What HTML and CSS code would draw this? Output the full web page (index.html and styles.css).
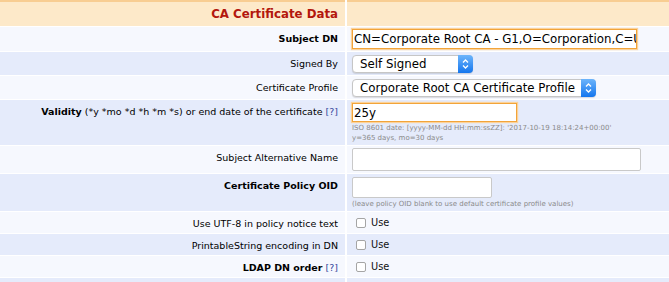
FILE: index.html
```html
<!DOCTYPE html>
<html lang="en">
<head>
    <meta charset="UTF-8">
    <meta name="viewport" content="width=device-width, initial-scale=1.0">
    <title>Create CA</title>
    <link rel="stylesheet" href="styles.css">
</head>
<body>

    <table class="edit">
        <tr class="section">
            <td class="label"><h3>CA Certificate Data</h3></td>
            <td class="value"></td>
        </tr>
        <tr class="light">
            <td class="label"><strong>Subject DN</strong></td>
            <td class="value"><input type="text" class="text required dn" value="CN=Corporate Root CA - G1,O=Corporation,C=US"></td>
        </tr>
        <tr class="dark">
            <td class="label">Signed By</td>
            <td class="value">
                <span class="select signed">
                    <select><option>Self Signed</option></select>
                    <svg class="arrows" viewBox="0 0 15 18"><defs><linearGradient id="g1" x1="0" y1="0" x2="0" y2="1"><stop offset="0" stop-color="#6db5fb"/><stop offset="1" stop-color="#1476ee"/></linearGradient></defs><path d="M0 0H11A4 4 0 0 1 15 4V14A4 4 0 0 1 11 18H0Z" fill="url(#g1)"/><path d="M5 7.5L7.5 5L10 7.5M5 10.5L7.5 13L10 10.5" fill="none" stroke="#fff" stroke-width="1.3"/></svg>
                </span>
            </td>
        </tr>
        <tr class="light">
            <td class="label">Certificate Profile</td>
            <td class="value">
                <span class="select profile">
                    <select><option>Corporate Root CA Certificate Profile</option></select>
                    <svg class="arrows" viewBox="0 0 15 18"><defs><linearGradient id="g2" x1="0" y1="0" x2="0" y2="1"><stop offset="0" stop-color="#6db5fb"/><stop offset="1" stop-color="#1476ee"/></linearGradient></defs><path d="M0 0H11A4 4 0 0 1 15 4V14A4 4 0 0 1 11 18H0Z" fill="url(#g2)"/><path d="M5 7.5L7.5 5L10 7.5M5 10.5L7.5 13L10 10.5" fill="none" stroke="#fff" stroke-width="1.3"/></svg>
                </span>
            </td>
        </tr>
        <tr class="dark">
            <td class="label"><strong>Validity</strong> (*y *mo *d *h *m *s) or end date of the certificate <a href="#">[?]</a></td>
            <td class="value">
                <input type="text" class="text required validity" value="25y">
                <p class="help">ISO 8601 date: [yyyy-MM-dd HH:mm:ssZZ]: '2017-10-19 18:14:24+00:00'<br>y=365 days, mo=30 days</p>
            </td>
        </tr>
        <tr class="light">
            <td class="label">Subject Alternative Name</td>
            <td class="value"><input type="text" class="text san"></td>
        </tr>
        <tr class="dark">
            <td class="label"><strong>Certificate Policy OID</strong></td>
            <td class="value">
                <input type="text" class="text oid">
                <p class="help">(leave policy OID blank to use default certificate profile values)</p>
            </td>
        </tr>
        <tr class="light">
            <td class="label">Use UTF-8 in policy notice text</td>
            <td class="value check"><input type="checkbox" id="utf8"><label for="utf8">Use</label></td>
        </tr>
        <tr class="dark">
            <td class="label">PrintableString encoding in DN</td>
            <td class="value check"><input type="checkbox" id="printable"><label for="printable">Use</label></td>
        </tr>
        <tr class="light">
            <td class="label"><strong>LDAP DN order</strong> <a href="#">[?]</a></td>
            <td class="value check"><input type="checkbox" id="ldap"><label for="ldap">Use</label></td>
        </tr>
        <tr class="dark">
            <td class="label"></td>
            <td class="value"><textarea class="desc" rows="3"></textarea></td>
        </tr>
    </table>

</body>
</html>
```

FILE: styles.css
```css
body {
    margin: 0;
    background: #fff;
    font-family: "DejaVu Sans", Verdana, sans-serif;
    font-size: 9.5px;
    color: #000;
    overflow: hidden;
}

table.edit {
    border-collapse: separate;
    border-spacing: 2px 1px;
    width: 780px;
    margin: -1px 0 0 -2px;
}

td {
    vertical-align: top;
    padding: 2px 7px 2px 5px;
}

td.label {
    width: 333px;
    text-align: right;
    padding-top: 5px;
    line-height: 13px;
}

td.value {
    padding-left: 5px;
}

a {
    color: #34479c;
    text-decoration: none;
}

tr.section td {
    background: #fde9c9;
    border-top: 2px solid #f8cd92;
    height: 20px;
    padding-top: 2px;
}

h3 {
    margin: 0;
    color: #b3170d;
    font-size: 11.8px;
    line-height: 20px;
}

tr.light td {
    background: #f6f8fe;
}

tr.dark td {
    background: #e5ebfb;
}

input.text {
    box-sizing: border-box;
    font-family: "DejaVu Sans", Verdana, sans-serif;
    font-size: 11.8px;
    padding: 0 0 0 1px;
    border: 1px solid #c9c9c9;
    background: #fff;
    margin: 0;
    display: block;
}

input.required {
    border: 1px solid #f2a43a;
    box-shadow: 0 0 1px 1px #fbd29a;
}

input.dn {
    width: 285px;
    height: 20px;
}

input.validity {
    width: 165px;
    height: 19px;
    margin-top: 1px;
}

input.san {
    width: 289px;
    height: 23px;
    border-radius: 2px;
}

input.oid {
    width: 140px;
    height: 21px;
    margin-top: 1px;
    border-radius: 2px;
}

.help {
    margin: 1px 0 0;
    color: #8a8a8a;
    font-size: 7px;
    line-height: 10px;
}

.select {
    position: relative;
    display: inline-block;
    margin-top: 1px;
    vertical-align: top;
}

.select select {
    appearance: none;
    -webkit-appearance: none;
    box-sizing: border-box;
    height: 18px;
    margin: 0;
    padding: 0 20px 0 7px;
    border: 1px solid #c6c6c6;
    border-radius: 4px;
    background: #fff;
    box-shadow: 0 1px 1px rgba(0, 0, 0, 0.12);
    font-family: "DejaVu Sans", Verdana, sans-serif;
    font-size: 11.8px;
    color: #000;
    display: block;
}

.select.signed select {
    width: 121px;
}

.select.profile select {
    width: 244px;
}

.select .arrows {
    position: absolute;
    right: 0;
    top: 0;
    width: 15px;
    height: 18px;
}

td.check {
    padding-top: 5px;
    padding-bottom: 4px;
}

td.check input {
    appearance: none;
    -webkit-appearance: none;
    width: 10px;
    height: 10px;
    margin: 1px 5px 0 4px;
    border: 1px solid #a5a5a5;
    border-radius: 2px;
    background: #fff;
    vertical-align: top;
}

td.check label {
    font-size: 9.8px;
    line-height: 12px;
    vertical-align: top;
    color: #111;
}

textarea.desc {
    box-sizing: border-box;
    width: 257px;
    height: 40px;
    margin-top: 2px;
    border: 1px solid #9a9a9a;
    border-top-color: #6e6e6e;
    display: block;
}
```
